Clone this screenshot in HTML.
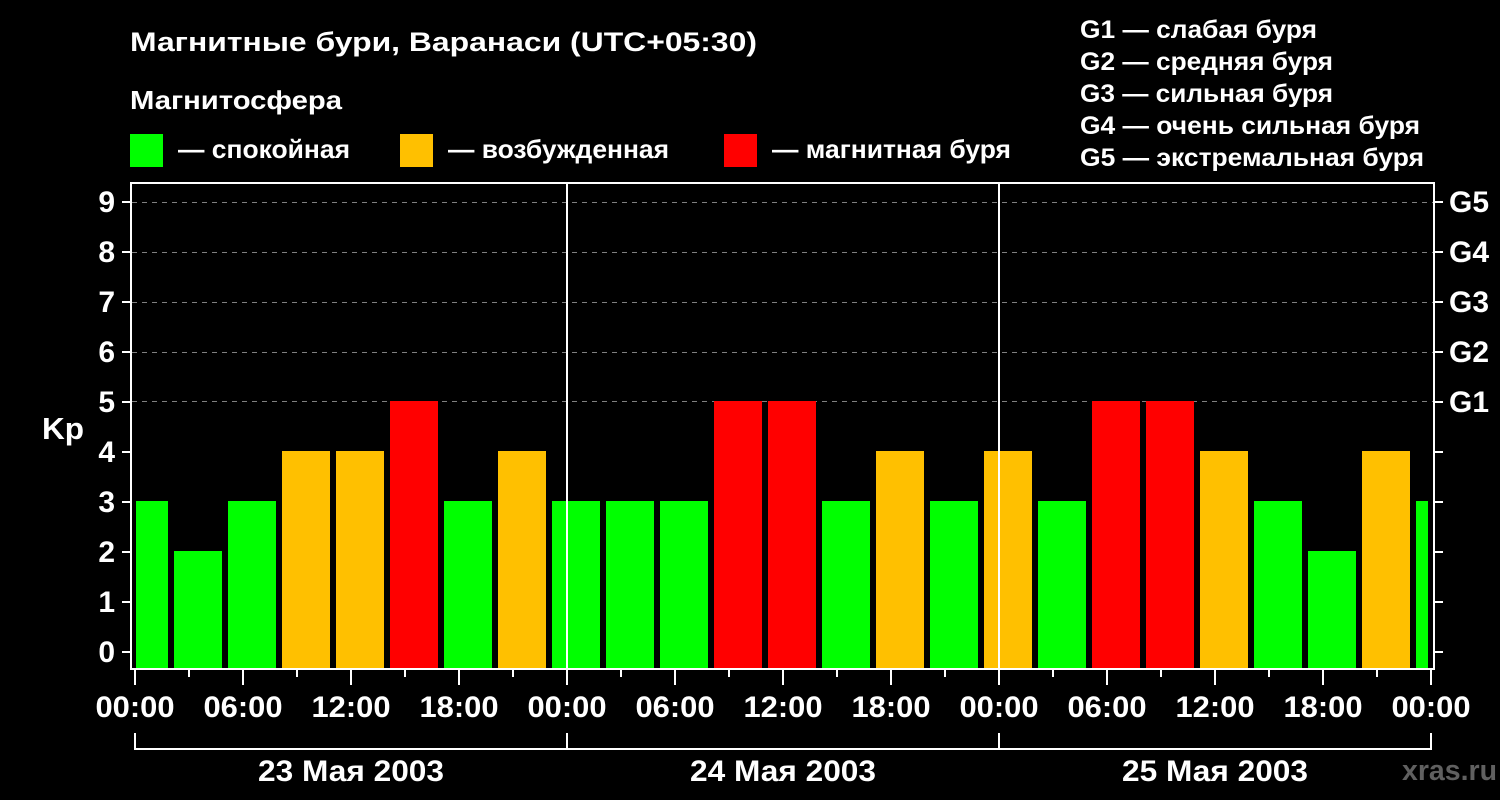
<!DOCTYPE html>
<html><head><meta charset="utf-8"><style>
html,body{margin:0;padding:0;background:#000;}
svg{display:block;}
text{font-family:"Liberation Sans","DejaVu Sans",sans-serif;font-weight:bold;fill:#fff;}
</style></head><body>
<svg width="1500" height="800" xmlns="http://www.w3.org/2000/svg">
<rect width="1500" height="800" fill="#000"/>
<text x="130" y="51" font-size="27" textLength="627" lengthAdjust="spacingAndGlyphs">Магнитные бури, Варанаси (UTC+05:30)</text>
<text x="130" y="109" font-size="26" textLength="212" lengthAdjust="spacingAndGlyphs">Магнитосфера</text>
<rect x="130" y="134" width="33" height="33" fill="#00ff00"/>
<text x="178" y="158" font-size="26" textLength="172" lengthAdjust="spacingAndGlyphs">— спокойная</text>
<rect x="400" y="134" width="33" height="33" fill="#ffc000"/>
<text x="448" y="158" font-size="26" textLength="221" lengthAdjust="spacingAndGlyphs">— возбужденная</text>
<rect x="724" y="134" width="33" height="33" fill="#ff0000"/>
<text x="772" y="158" font-size="26" textLength="239" lengthAdjust="spacingAndGlyphs">— магнитная буря</text>
<g font-size="25">
<text x="1080" y="38" textLength="237" lengthAdjust="spacingAndGlyphs">G1 — слабая буря</text>
<text x="1080" y="70" textLength="253" lengthAdjust="spacingAndGlyphs">G2 — средняя буря</text>
<text x="1080" y="102" textLength="253" lengthAdjust="spacingAndGlyphs">G3 — сильная буря</text>
<text x="1080" y="134" textLength="340" lengthAdjust="spacingAndGlyphs">G4 — очень сильная буря</text>
<text x="1080" y="166" textLength="344" lengthAdjust="spacingAndGlyphs">G5 — экстремальная буря</text>
</g>
<g stroke="#808080" stroke-width="1" stroke-dasharray="5,5">
<line x1="132" y1="202.5" x2="1433" y2="202.5"/>
<line x1="132" y1="252.5" x2="1433" y2="252.5"/>
<line x1="132" y1="302.5" x2="1433" y2="302.5"/>
<line x1="132" y1="352.5" x2="1433" y2="352.5"/>
<line x1="132" y1="401.5" x2="1433" y2="401.5"/>
</g>
<g>
<rect x="136" y="501" width="32" height="167" fill="#00ff00"/>
<rect x="174" y="551" width="48" height="117" fill="#00ff00"/>
<rect x="228" y="501" width="48" height="167" fill="#00ff00"/>
<rect x="282" y="451" width="48" height="217" fill="#ffc000"/>
<rect x="336" y="451" width="48" height="217" fill="#ffc000"/>
<rect x="390" y="401" width="48" height="267" fill="#ff0000"/>
<rect x="444" y="501" width="48" height="167" fill="#00ff00"/>
<rect x="498" y="451" width="48" height="217" fill="#ffc000"/>
<rect x="552" y="501" width="48" height="167" fill="#00ff00"/>
<rect x="606" y="501" width="48" height="167" fill="#00ff00"/>
<rect x="660" y="501" width="48" height="167" fill="#00ff00"/>
<rect x="714" y="401" width="48" height="267" fill="#ff0000"/>
<rect x="768" y="401" width="48" height="267" fill="#ff0000"/>
<rect x="822" y="501" width="48" height="167" fill="#00ff00"/>
<rect x="876" y="451" width="48" height="217" fill="#ffc000"/>
<rect x="930" y="501" width="48" height="167" fill="#00ff00"/>
<rect x="984" y="451" width="48" height="217" fill="#ffc000"/>
<rect x="1038" y="501" width="48" height="167" fill="#00ff00"/>
<rect x="1092" y="401" width="48" height="267" fill="#ff0000"/>
<rect x="1146" y="401" width="48" height="267" fill="#ff0000"/>
<rect x="1200" y="451" width="48" height="217" fill="#ffc000"/>
<rect x="1254" y="501" width="48" height="167" fill="#00ff00"/>
<rect x="1308" y="551" width="48" height="117" fill="#00ff00"/>
<rect x="1362" y="451" width="48" height="217" fill="#ffc000"/>
<rect x="1416" y="501" width="12" height="167" fill="#00ff00"/>
</g>
<rect x="566" y="183" width="2" height="486" fill="#fff"/>
<rect x="998" y="183" width="2" height="486" fill="#fff"/>
<rect x="131" y="183" width="1303" height="486" fill="none" stroke="#fff" stroke-width="2"/>
<g stroke="#fff" stroke-width="2">
<line x1="122" y1="652" x2="131" y2="652"/><line x1="122" y1="602" x2="131" y2="602"/>
<line x1="122" y1="552" x2="131" y2="552"/><line x1="122" y1="502" x2="131" y2="502"/>
<line x1="122" y1="452" x2="131" y2="452"/><line x1="122" y1="402" x2="131" y2="402"/>
<line x1="122" y1="352" x2="131" y2="352"/><line x1="122" y1="302" x2="131" y2="302"/>
<line x1="122" y1="252" x2="131" y2="252"/><line x1="122" y1="202" x2="131" y2="202"/>
<line x1="1434" y1="652" x2="1443" y2="652"/><line x1="1434" y1="602" x2="1443" y2="602"/>
<line x1="1434" y1="552" x2="1443" y2="552"/><line x1="1434" y1="502" x2="1443" y2="502"/>
<line x1="1434" y1="452" x2="1443" y2="452"/><line x1="1434" y1="402" x2="1443" y2="402"/>
<line x1="1434" y1="352" x2="1443" y2="352"/><line x1="1434" y1="302" x2="1443" y2="302"/>
<line x1="1434" y1="252" x2="1443" y2="252"/><line x1="1434" y1="202" x2="1443" y2="202"/>
</g>
<g font-size="30" text-anchor="end">
<text x="115" y="662">0</text><text x="115" y="612">1</text><text x="115" y="562">2</text>
<text x="115" y="512">3</text><text x="115" y="462">4</text><text x="115" y="412">5</text>
<text x="115" y="362">6</text><text x="115" y="312">7</text><text x="115" y="262">8</text>
<text x="115" y="212">9</text>
</g>
<text x="42" y="439" font-size="31" textLength="42" lengthAdjust="spacingAndGlyphs">Kp</text>
<g font-size="30">
<text x="1449" y="212">G5</text><text x="1449" y="262">G4</text><text x="1449" y="312">G3</text>
<text x="1449" y="362">G2</text><text x="1449" y="412">G1</text>
</g>
<g stroke="#fff" stroke-width="2">
<line x1="135" y1="669" x2="135" y2="685"/><line x1="189" y1="669" x2="189" y2="677"/>
<line x1="243" y1="669" x2="243" y2="685"/><line x1="297" y1="669" x2="297" y2="677"/>
<line x1="351" y1="669" x2="351" y2="685"/><line x1="405" y1="669" x2="405" y2="677"/>
<line x1="459" y1="669" x2="459" y2="685"/><line x1="513" y1="669" x2="513" y2="677"/>
<line x1="567" y1="669" x2="567" y2="685"/><line x1="621" y1="669" x2="621" y2="677"/>
<line x1="675" y1="669" x2="675" y2="685"/><line x1="729" y1="669" x2="729" y2="677"/>
<line x1="783" y1="669" x2="783" y2="685"/><line x1="837" y1="669" x2="837" y2="677"/>
<line x1="891" y1="669" x2="891" y2="685"/><line x1="945" y1="669" x2="945" y2="677"/>
<line x1="999" y1="669" x2="999" y2="685"/><line x1="1053" y1="669" x2="1053" y2="677"/>
<line x1="1107" y1="669" x2="1107" y2="685"/><line x1="1161" y1="669" x2="1161" y2="677"/>
<line x1="1215" y1="669" x2="1215" y2="685"/><line x1="1269" y1="669" x2="1269" y2="677"/>
<line x1="1323" y1="669" x2="1323" y2="685"/><line x1="1377" y1="669" x2="1377" y2="677"/>
<line x1="1431" y1="669" x2="1431" y2="685"/>
<line x1="135" y1="733" x2="135" y2="750"/><line x1="567" y1="733" x2="567" y2="750"/>
<line x1="999" y1="733" x2="999" y2="750"/><line x1="1431" y1="733" x2="1431" y2="750"/>
<line x1="134" y1="749" x2="1432" y2="749"/>
</g>
<g font-size="30" text-anchor="middle">
<text x="135" y="717" textLength="79" lengthAdjust="spacingAndGlyphs">00:00</text>
<text x="243" y="717" textLength="79" lengthAdjust="spacingAndGlyphs">06:00</text>
<text x="351" y="717" textLength="79" lengthAdjust="spacingAndGlyphs">12:00</text>
<text x="459" y="717" textLength="79" lengthAdjust="spacingAndGlyphs">18:00</text>
<text x="567" y="717" textLength="79" lengthAdjust="spacingAndGlyphs">00:00</text>
<text x="675" y="717" textLength="79" lengthAdjust="spacingAndGlyphs">06:00</text>
<text x="783" y="717" textLength="79" lengthAdjust="spacingAndGlyphs">12:00</text>
<text x="891" y="717" textLength="79" lengthAdjust="spacingAndGlyphs">18:00</text>
<text x="999" y="717" textLength="79" lengthAdjust="spacingAndGlyphs">00:00</text>
<text x="1107" y="717" textLength="79" lengthAdjust="spacingAndGlyphs">06:00</text>
<text x="1215" y="717" textLength="79" lengthAdjust="spacingAndGlyphs">12:00</text>
<text x="1323" y="717" textLength="79" lengthAdjust="spacingAndGlyphs">18:00</text>
<text x="1431" y="717" textLength="79" lengthAdjust="spacingAndGlyphs">00:00</text>
<text x="351" y="781" textLength="186" lengthAdjust="spacingAndGlyphs">23 Мая 2003</text>
<text x="783" y="781" textLength="186" lengthAdjust="spacingAndGlyphs">24 Мая 2003</text>
<text x="1215" y="781" textLength="186" lengthAdjust="spacingAndGlyphs">25 Мая 2003</text>
</g>
<text x="1402" y="780" font-size="29" style="fill:#606060" textLength="95" lengthAdjust="spacingAndGlyphs">xras.ru</text>
</svg>
</body></html>
